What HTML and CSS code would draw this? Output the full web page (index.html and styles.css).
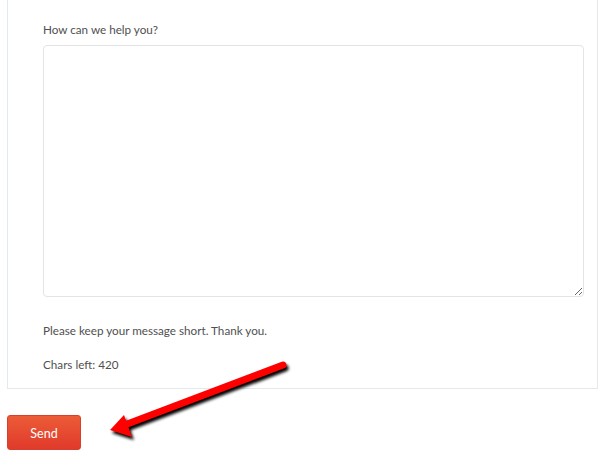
FILE: index.html
```html
<!DOCTYPE html>
<html>
<head>
<meta charset="utf-8">
<link rel="stylesheet" href="styles.css">
</head>
<body>
<div class="card">
  <label class="label" for="msg">How can we help you?</label>
  <textarea id="msg" class="message"></textarea>
  <p class="note">Please keep your message short. Thank you.</p>
  <p class="count">Chars left: 420</p>
</div>
<div class="actions">
  <button class="send">Send</button>
</div>
<svg class="arrow" width="612" height="474" viewBox="0 0 612 474">
  <defs>
    <filter id="sh" x="-20%" y="-50%" width="140%" height="200%">
      <feGaussianBlur stdDeviation="1.5"/>
    </filter>
  </defs>
  <g transform="translate(2,3)" filter="url(#sh)">
    <line x1="283" y1="365" x2="122" y2="426" stroke="#000" stroke-width="7" stroke-linecap="round"/>
    <polygon points="110,430 124,415 132,437" fill="#000"/>
  </g>
  <line x1="283" y1="365" x2="122" y2="426" stroke="#ff0000" stroke-width="7" stroke-linecap="round"/>
  <polygon points="110,430 124,415 132,437" fill="#ff0000"/>
</svg>
</body>
</html>
```
FILE: styles.css
```css
html, body {
  margin: 0;
  padding: 0;
  background: #fff;
}
body {
  font-family: Lato, "Open Sans", sans-serif;
  color: #505050;
  width: 612px;
  height: 474px;
  overflow: hidden;
  position: relative;
}
.card {
  margin-left: 7px;
  width: 591px;
  box-sizing: border-box;
  border: 1px solid #e2eaed;
  border-top: none;
  padding: 21px 14px 16px 35px;
}
.label {
  display: block;
  font-size: 11.7px;
  line-height: 16px;
  margin-bottom: 8px;
}
.message {
  display: block;
  width: 541px;
  height: 252px;
  box-sizing: border-box;
  border: 1px solid #e4e4e4;
  border-radius: 4px;
  margin: 0;
  padding: 6px;
  resize: vertical;
  font-family: inherit;
}
.note, .count {
  margin: 0;
  font-size: 11.7px;
  line-height: 16px;
}
.note {
  margin-top: 25px;
}
.count {
  margin-top: 18px;
}
.actions {
  padding: 26px 0 0 7px;
}
.send {
  display: block;
  width: 74px;
  height: 35px;
  border: 1px solid #d8402c;
  border-radius: 3px;
  background: linear-gradient(#ec5c37, #e03a2b);
  color: #fff;
  font-family: Lato, "Open Sans", sans-serif;
  font-size: 12.5px;
  padding: 2px 0 0;
}
.arrow {
  position: absolute;
  left: 0;
  top: 0;
  pointer-events: none;
}
```
